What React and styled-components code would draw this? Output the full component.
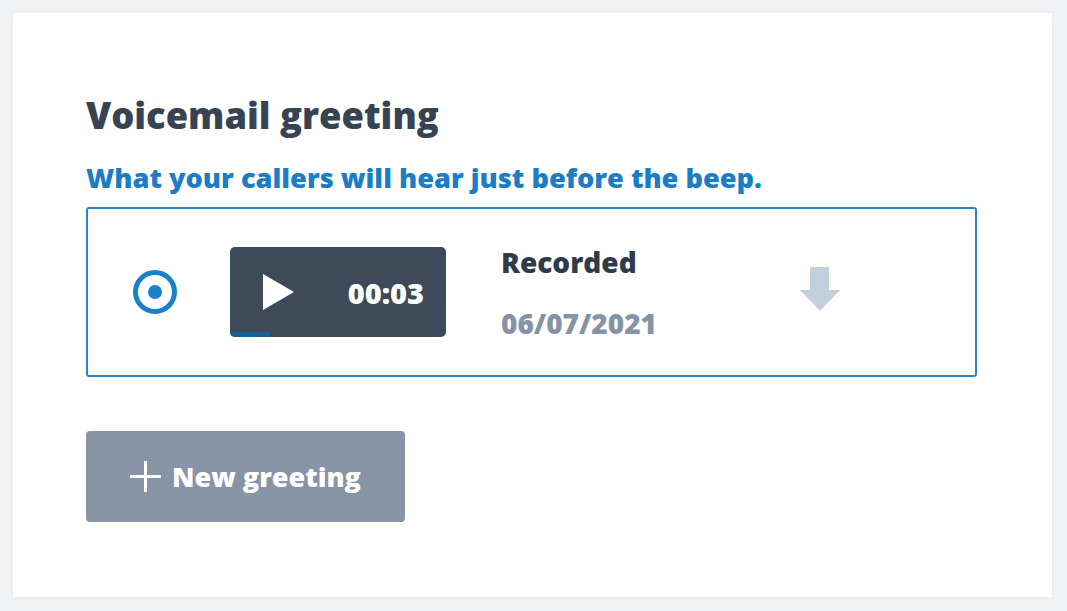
import React from "react";
import styled, { createGlobalStyle } from "styled-components";

const GlobalStyle = createGlobalStyle`
  html, body {
    margin: 0;
    padding: 0;
    background: #f2f3f5;
    font-family: "Open Sans", "Liberation Sans", sans-serif;
  }
  * { box-sizing: border-box; }
`;

const Page = styled.div`
  padding: 13px 15px 14px 13px;
`;

const Card = styled.div`
  background: #fff;
  height: 584px;
  padding: 80px 75px 0 73px;
  box-shadow: 0 0 6px rgba(30, 40, 60, 0.06);
`;

const Title = styled.h1`
  margin: 0;
  font-size: 36.3px;
  line-height: 44px;
  font-weight: 800;
  color: #374352;
`;

const Subtitle = styled.p`
  margin: 24px 0 0;
  font-size: 27.2px;
  line-height: 34px;
  font-weight: 800;
  color: #1a7dc5;
  white-space: nowrap;
`;

const GreetingBox = styled.div`
  margin-top: 12px;
  height: 170px;
  border: 2px solid #2a82c8;
  border-radius: 3px;
  display: flex;
  align-items: center;
  padding-left: 45px;
`;

const Radio = styled.span`
  flex: none;
  width: 44px;
  height: 44px;
  border-radius: 50%;
  border: 5px solid #1a80c9;
  display: flex;
  align-items: center;
  justify-content: center;
  &::after {
    content: "";
    width: 14px;
    height: 14px;
    border-radius: 50%;
    background: #1a80c9;
  }
`;

const Player = styled.div`
  position: relative;
  flex: none;
  margin-left: 53px;
  width: 216px;
  height: 90px;
  background: #3d4a5a;
  border-radius: 5px;
  overflow: hidden;
  display: flex;
  align-items: center;
  padding: 0 22px 0 33px;
  justify-content: space-between;
`;

const Progress = styled.div`
  position: absolute;
  left: 0;
  bottom: 0;
  height: 5px;
  background: #175f99;
`;

const Time = styled.span`
  color: #fff;
  font-size: 29px;
  font-weight: 800;
`;

const Meta = styled.div`
  flex: none;
  width: 160px;
  margin-left: 55px;
  display: flex;
  flex-direction: column;
  gap: 27px;
`;

const MetaLabel = styled.span`
  font-size: 28px;
  line-height: 34px;
  font-weight: 800;
  color: ${(p) => p.$color};
  white-space: nowrap;
`;

const Download = styled.button`
  flex: none;
  margin-left: 139px;
  border: none;
  background: none;
  padding: 0;
  display: flex;
  margin-top: -6px;
`;

const NewButton = styled.button`
  margin-top: 54px;
  width: 319px;
  height: 91px;
  border: none;
  border-radius: 4px;
  background: #8794a6;
  color: #fff;
  font-family: inherit;
  font-size: 27px;
  font-weight: 800;
  display: flex;
  align-items: center;
  padding-left: 44px;
  gap: 11px;
`;

const PlayIcon = () => (
  <svg width="31" height="36" viewBox="0 0 31 36">
    <path d="M0 0 L31 18 L0 36 Z" fill="#fff" />
  </svg>
);

const DownloadIcon = () => (
  <svg width="40" height="44" viewBox="0 0 40 44">
    <path d="M10 0 H29 V23 H40 L20 44 L0 23 H10 Z" fill="#c2cfdc" />
  </svg>
);

const PlusIcon = () => (
  <svg width="31" height="31" viewBox="0 0 31 31">
    <path d="M15.5 0 V31 M0 15.5 H31" stroke="#fff" strokeWidth="3" />
  </svg>
);

export default function App() {
  return (
    <Page>
      <GlobalStyle />
      <Card>
        <Title>Voicemail greeting</Title>
        <Subtitle>What your callers will hear just before the beep.</Subtitle>
        <GreetingBox>
          <Radio />
          <Player>
            <PlayIcon />
            <Time>00:03</Time>
            <Progress style={{ width: `${(40 / 216) * 100}%` }} />
          </Player>
          <Meta>
            <MetaLabel $color="#2f3b4a">Recorded</MetaLabel>
            <MetaLabel $color="#8593a6">06/07/2021</MetaLabel>
          </Meta>
          <Download>
            <DownloadIcon />
          </Download>
        </GreetingBox>
        <NewButton>
          <PlusIcon />
          New greeting
        </NewButton>
      </Card>
    </Page>
  );
}
